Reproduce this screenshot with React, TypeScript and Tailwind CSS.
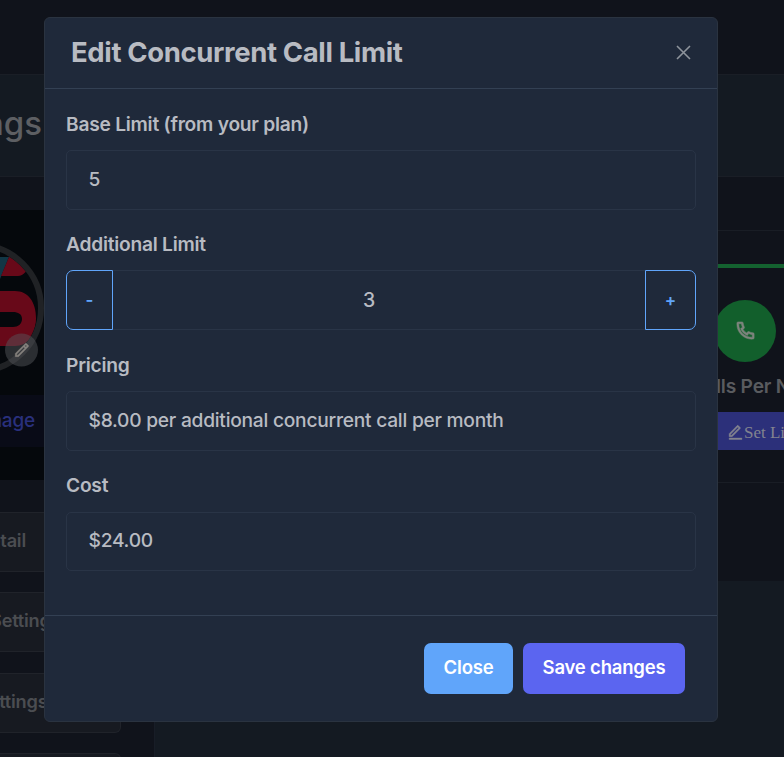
import React from "react";
import { RiEditLine, RiPencilLine, RiPhoneLine } from "react-icons/ri";

const font = "font-['Inter',sans-serif]";

function Field({ label, children, className = "" }: { label: string; children: React.ReactNode; className?: string }) {
  return (
    <div className={`flex flex-col ${className}`}>
      <label className="h-[26px] text-[19.2px] leading-[26px] font-semibold tracking-[-0.24px] whitespace-nowrap">{label}</label>
      <div className="mt-[13px] flex">{children}</div>
    </div>
  );
}

function ReadOnly({ value, className = "h-[60px]" }: { value: string; className?: string }) {
  return (
    <div className={`flex w-full items-center rounded-[5px] border border-[#293446] px-[21.5px] pb-[2px] text-[19.2px] font-medium tracking-[-0.25px] ${className}`}>
      {value}
    </div>
  );
}

function Sidebar() {
  return (
    <aside className="flex w-[155px] shrink-0 flex-col border-r border-[#181d27] bg-[#10131b]">
      <div className="mt-[33px] h-[270px] shrink-0 bg-[#05080c]">
        <div className="h-[185px] pt-[32px]">
          <div className="relative h-[136px] w-[44px]">
            <svg width="44" height="136" viewBox="0 0 44 136" className="block">
              <clipPath id="avatar"><circle cx="-22" cy="66" r="60" /></clipPath>
              <g clipPath="url(#avatar)">
                <path d="M0 15H9L0 37Z" fill="#123645" />
                <path d="M9 15H30V30H25.500Q22 34 18 34H1Z" fill="#680919" />
                <path d="M0 49H15C28 49 36 60 36 76S28 104 15 104H0V85H13C18 85 22 82 22 77S18 70 13 70H0Z" fill="#680919" />
              </g>
              <circle cx="-22" cy="66" r="63" fill="none" stroke="#202225" strokeWidth="6" />
              <circle cx="21.5" cy="108" r="16.5" fill="#55575b" fillOpacity=".48" />
            </svg>
            <RiPencilLine className="absolute top-[99px] left-[13px] stroke-[#85827d] stroke-[0.5px] text-[#85827d]" size={18} />
          </div>
        </div>
        <div className="flex h-[52px] items-center bg-[#090b17]">
          <span className="-ml-[20px] w-[55px] pt-px text-right text-[19px] font-medium tracking-[-0.2px] text-[#29307d]">Image</span>
        </div>
      </div>
      <nav className="mt-[32px] flex flex-col gap-[20.400px] text-[18.200px] font-semibold tracking-[-0.2px] text-[#4b4d51]">
        <div className="flex h-[60px] w-[121px] shrink-0 items-center rounded-r-[6px] border border-l-0 border-[#20232a] bg-[#171a21]"><span className="-ml-[40px] w-[66px] pb-[2px] text-right">Detail</span></div>
        <div className="flex h-[60px] w-[121px] shrink-0 items-center rounded-r-[6px] border border-l-0 border-[#20232a] bg-[#171a21]"><span className="-ml-[10px] pb-[3px]">Settings</span></div>
        <div className="flex h-[60px] w-[121px] shrink-0 items-center rounded-r-[6px] border border-l-0 border-[#20232a] bg-[#171a21]"><span className="-ml-[23px] pb-[3px]">Settings</span></div>
        <div className="h-[60px] w-[121px] shrink-0 rounded-r-[6px] border border-l-0 border-[#20232a] bg-[#171a21]" />
      </nav>
    </aside>
  );
}

function UsageCard() {
  return (
    <section className="flex h-[404px] w-[67px] flex-col overflow-hidden bg-[#10131b]">
      <div className="h-[54px] shrink-0 border-b border-[#191d25]" />
      <div className="mt-[33px] h-[4px] shrink-0 bg-[#146230]" />
      <div className="mt-[32px] -ml-[3px] flex h-[62px] w-[62px] shrink-0 items-center justify-center rounded-full bg-[#125f2c]">
        <RiPhoneLine size={23} className="mb-px stroke-[#7d847d] stroke-[0.5px] text-[#7d847d]" />
      </div>
      <div className="mt-[12px] -ml-[1px] h-[24px] shrink-0 text-[19.200px] leading-[24px] font-semibold tracking-[-0.2px] whitespace-nowrap text-[#595b5f]">lls Per Number</div>
      <div className="mt-[14px] flex h-[38px] shrink-0 items-center bg-[#2c307a] pt-[3px] pl-[10px] font-['Liberation_Serif',serif] text-[17px] whitespace-nowrap text-[#82838f]">
        <RiEditLine size={17} className="shrink-0 stroke-current stroke-[0.6px]" />
        <span>Set Limit</span>
      </div>
      <div className="mt-[32px] h-px shrink-0 bg-[#191d25]" />
    </section>
  );
}

function Modal() {
  return (
    <div className="absolute top-[17px] left-[44px] flex h-[705px] w-[674px] flex-col rounded-[6px] border border-[#2a3340] bg-[#1f293a] text-[#b8bbc2]">
      <header className="flex h-[71px] shrink-0 items-center justify-between border-b border-[#334053] pr-[26px] pl-[26px]">
        <h2 className="pb-px text-[27.5px] font-bold tracking-[-0.37px] whitespace-nowrap">Edit Concurrent Call Limit</h2>
        <svg width="15" height="15" viewBox="0 0 15 15" stroke="#8d939b" strokeWidth="1.6" className="mb-[2px]"><path d="m1 1 13 13M14 1 1 14" /></svg>
      </header>
      <main className="flex h-[527px] shrink-0 flex-col border-b border-[#334053] px-[21px] pt-[22px]">
        <Field label="Base Limit (from your plan)"><ReadOnly value="5" /></Field>
        <Field label="Additional Limit" className="mt-[21px]">
          <button className="h-[60px] w-[47px] rounded-l-[7px] border border-[#60a5fa] pt-[2px] text-[17px] font-semibold text-[#60a5fa]">-</button>
          <div className="flex h-[60px] flex-1 items-center justify-center border-y border-[#293446] pt-[2px] pr-[20px] text-[19.5px] font-medium">3</div>
          <button className="h-[60px] w-[51px] rounded-r-[7px] border border-[#60a5fa] pt-[2px] text-[17px] font-semibold text-[#60a5fa]">+</button>
        </Field>
        <Field label="Pricing" className="mt-[22px]"><ReadOnly value="$8.00 per additional concurrent call per month" /></Field>
        <div className="mt-[21px] flex flex-col gap-[14px]">
          <label className="h-[26px] text-[19.2px] leading-[26px] font-semibold tracking-[-0.24px]">Cost</label>
          <ReadOnly value="$24.00" className="h-[59px]" />
        </div>
      </main>
      <footer className="flex justify-end gap-[10px] pt-[27px] pr-[32px] text-[18.5px] font-semibold tracking-[-0.2px] text-white">
        <button className="h-[51px] w-[89px] rounded-[7px] bg-[#60a5fa] pb-px">Close</button>
        <button className="h-[51px] w-[162px] rounded-[7px] bg-[#5b65f0] pb-px">Save changes</button>
      </footer>
    </div>
  );
}

export default function App() {
  return (
    <div className={`relative flex h-[757px] w-[784px] flex-col overflow-hidden bg-[#141a22] ${font}`}>
      <div className="h-[74px] shrink-0 bg-[#10131b]" />
      <div className="flex h-[103px] shrink-0 items-center border-y border-[#1a1e26] bg-[#141a22] pb-[3px]">
        <span className="-ml-[110px] w-[152px] text-right text-[33px] font-medium text-[#5d5f63]">Settings</span>
      </div>
      <div className="flex h-[580px] shrink-0 justify-between">
        <Sidebar />
        <UsageCard />
      </div>
      <Modal />
    </div>
  );
}
